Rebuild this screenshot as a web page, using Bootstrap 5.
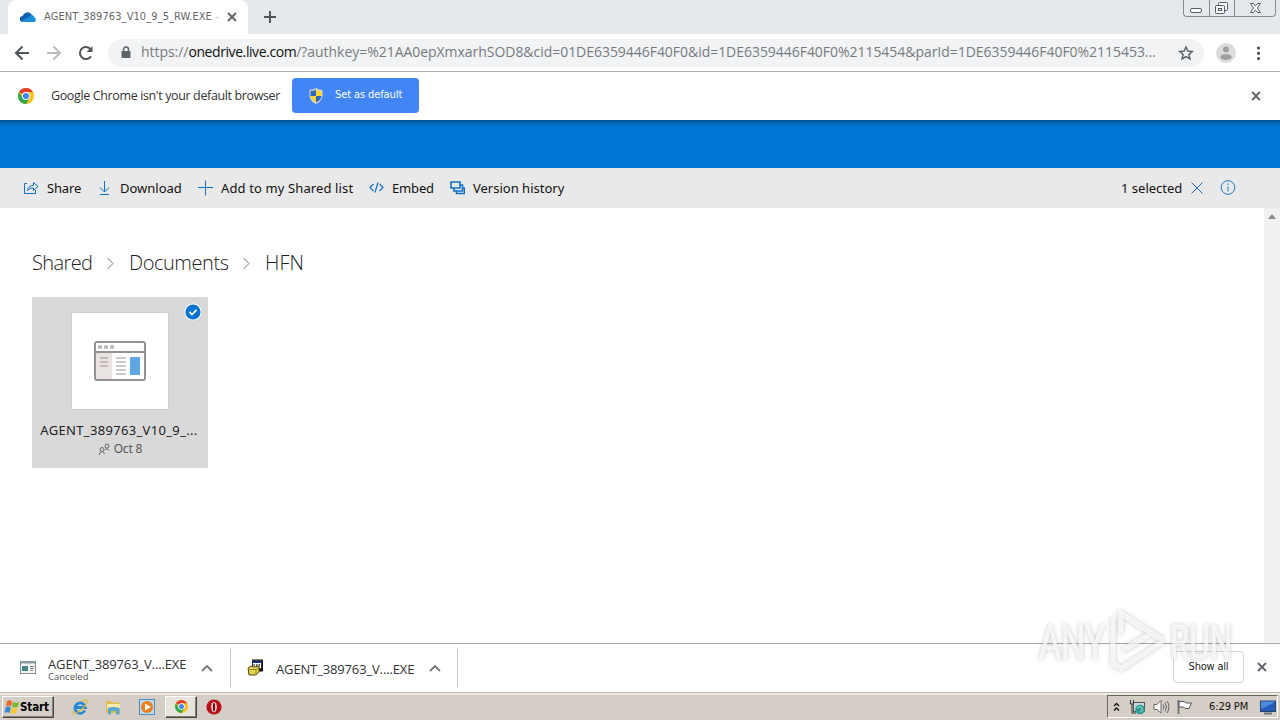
<!DOCTYPE html>
<html lang="en">
<head>
<meta charset="utf-8">
<meta name="viewport" content="width=device-width, initial-scale=1">
<title>OneDrive</title>
<link href="https://cdn.jsdelivr.net/npm/bootstrap@5.3.0/dist/css/bootstrap.min.css" rel="stylesheet">
<style>
body{width:1280px;height:720px;overflow:hidden;background:#fff;font-family:"DejaVu Sans Condensed","DejaVu Sans",sans-serif;font-size:12px;line-height:16px;color:#222;white-space:nowrap}
svg{display:block;flex:none}
.tabstrip{height:34px;background:#e4e9ed;padding-left:8px}
.tab-on{width:240px;background:#fff;border-radius:8px 8px 0 0;padding:0 11px 0 12px}
.tab-title{width:176px;margin-left:8px;font-family:"DejaVu Sans Condensed","DejaVu Sans",sans-serif;font-size:11px;color:#666;letter-spacing:.08px}
.win-ctl{width:93px;height:17px;border:1px solid #888c90;border-top:0;border-radius:0 0 4px 4px;margin-right:4px}
.win-ctl>span+span{border-left:1px solid #888c90}
.win-ctl>span{width:25px;height:16px}.win-ctl>span:last-child{width:42px}
.addr-row{height:38px;border-bottom:1px solid #adb0ae;padding-left:14px}
.omni{width:1096px;height:28px;background:#f1f3f4;border-radius:14px;margin-left:14px;padding:0 10px 0 9px}
.url{width:1034px;margin-left:10px;margin-top:-2px;font-family:"Open Sans",sans-serif;font-size:14px;color:#777b7f;letter-spacing:-.04px}
.url b{font-weight:400;color:#111;letter-spacing:-.42px}
.infobar{height:48px;padding-left:18px}
.info-text{width:241px;margin-left:17px;font-family:"Open Sans",sans-serif;font-size:12.5px;color:#333;letter-spacing:-.37px}
.btn-set{width:127px;height:35px;background:#4285f4;border-radius:4px;color:#fff;font-size:11px;padding:0 17px;border:0;margin-top:-1px}
.set-label{width:67px;margin-left:12px;text-align:left;letter-spacing:-.1px}
.suite{height:48px;background:linear-gradient(#04518c,#0068b8 3px,#0078d7 7px)}
.cmdbar{height:40px;background:#e9e9e9;padding-left:23px;font-family:"Noto Sans",sans-serif;font-size:13px;color:#111}
.cmd svg{margin-right:8px}
.c1{width:75px}.c2{width:100px}.c3{width:171px;letter-spacing:.12px}.c4{width:81px}
.c1,.c4{letter-spacing:-.15px}
.sel-text{width:69px}
.info-i{margin:0 44px 0 17px}
.page-body{height:435px}
.canvas{padding:43px 0 0 32px}
.crumbs{height:24px;font-family:"Open Sans",sans-serif;font-weight:300;font-size:20px;line-height:24px;color:#222}
.k1{width:97px;letter-spacing:-.6px}.k2{width:136px;letter-spacing:-.45px}
.crumbs svg{margin-right:11px}
.tile{width:176px;height:171px;background:#d9d9d9;margin-top:22px;padding-top:16px}
.thumb{width:96px;height:96px;background:#fff;box-shadow:0 0 2px #bbb}
.tick{right:6px;top:6px}
.tile-name{font-family:"Noto Sans",sans-serif;font-size:13px;margin:13px 2px 0 0;color:#222;letter-spacing:.33px}
.tile-date{font-family:"Noto Sans",sans-serif;font-size:12px;color:#555;margin-top:3px;letter-spacing:-.15px}
.scroller{width:16px;background:#f1f1f1;padding:6px 0 0 4px}
.shelf{height:49px;border-top:1px solid #a9a9a9;font-family:"Open Sans",sans-serif}
.dl{height:38px;border-right:1px solid #c9c9c9;margin-top:5px}
.d1{width:231px;padding-left:20px}.d2{width:227px;padding-left:16px}
.dl-name{font-size:13px;color:#333;line-height:14px;letter-spacing:-.14px}
.dl-sub{font-size:9.5px;color:#555;line-height:9px;margin-top:1px}
.dl-a{width:139px;margin:8px 14px 0 12px}
.dl-b{width:138px;margin:13px 15px 0 12px}
.up1,.up2{margin-top:15px}
.box-ic{margin-top:10px}
.btn-all{width:71px;height:32px;border:1px solid #d5d5d5;border-radius:4px;background:transparent;font-size:11px;color:#222;padding:0;margin:7px 13px 0 0;font-family:"DejaVu Sans Condensed","DejaVu Sans",sans-serif;letter-spacing:-.2px}
.shelf-x{margin:18px 13px 0 0}
.taskbar{height:28px;background:#d5cec6;border-top:1px solid #b9b6b1;box-shadow:inset 0 2px 0 #eeeae5;padding-left:2px}
.raised{height:22px;border:1px solid;border-color:#fff #494642 #494642 #fff;box-shadow:inset -1px -1px #858179;background:#d5cec6}
.start{width:52px;font-size:11.5px;color:#000;padding-left:1px;letter-spacing:-.1px}
.app-on{width:32px;background:#e7e3dd}
.ie{margin-left:17px}.fold{margin-left:16px}.wmp{margin:0 10px 0 18px}.opera{margin-left:9px}
.tray{width:171px;height:23px;border:1px solid;border-color:#6c6860 #fff #fff #6c6860;margin-right:2px;color:#111;font-size:11px}
.t1{margin-left:5px}.t2{margin-left:9px}.t3{margin-left:8px}.t4{margin-left:7px}.clock{width:44px;margin-left:15px;letter-spacing:-.1px}.t5{margin-left:7px}
.brandmark{left:1032px;top:602px;pointer-events:none;filter:drop-shadow(0 0 2px rgba(0,0,0,.3))}
</style>
</head>
<body class="d-flex flex-column position-relative">
<svg width="0" height="0" class="position-absolute"><defs>
<g id="chrome"><circle cx="8" cy="8" r="8" fill="#fbc116"/><path d="M8 8 1.100 4A8 8 0 0 1 14.900 4H8z" fill="#e33b2e"/><path d="M1.100 4 4.600 10 8 11.500 11.500 10 8 16A8 8 0 0 1 1.100 4z" fill="#2da94f"/><circle cx="8" cy="8" r="4" fill="#fff"/><circle cx="8" cy="8" r="3.100" fill="#4285f4"/></g>
<path id="cross" d="M1 1 9 9M9 1 1 9" fill="none" stroke="#5f6368" stroke-width="1.800"/>
</defs></svg>

<header class="tabstrip d-flex">
  <div class="tab-on d-flex align-items-center">
    <svg width="16" height="12" viewBox="0 0 16 12"><path d="M3 11A3 3 0 0 1 2.600 5 5 5 0 0 1 11.500 3.500L15 7 13 11z" fill="#0f5fae"/><path d="M8 6 11.500 4Q14 4 14.200 6.500 16 7 16 9 15.800 11 13.500 11z" fill="#1490df"/><path d="M1 10 8 6.500 15 10.400Q14.300 11 13 11H3Q1.600 11 1 10z" fill="#1b8fdb"/></svg>
    <span class="tab-title">AGENT_389763_V10_9_5_RW.EXE <span class="text-black-50 opacity-50">-</span></span>
    <svg class="ms-auto" width="10" height="10"><use href="#cross"/></svg>
  </div>
  <svg class="align-self-center ms-3" width="12" height="12"><path d="M6 0V12M0 6H12" stroke="#50555a" stroke-width="2"/></svg>
  <div class="win-ctl d-flex ms-auto">
    <span><svg width="25" height="16"><rect x="6.500" y="8.500" width="11" height="4" rx="1.500" fill="#fff" stroke="#555a66"/></svg></span>
    <span><svg width="25" height="16" fill="#f5f7f8" stroke="#555a66"><rect x="8.500" y="2.500" width="9" height="8" rx="1"/><rect x="5.500" y="5.500" width="9" height="8" rx="1"/><rect x="8.500" y="8.500" width="3" height="2"/></svg></span>
    <span><svg width="42" height="16"><path d="M15.500 3.500h3l2 2.500 2-2.500h3l-3 4.500 3 4.500h-3l-2-2.500-2 2.500h-3l3-4.500z" fill="#fff" stroke="#555a66"/></svg></span>
  </div>
</header>

<nav class="addr-row d-flex align-items-center">
  <svg width="16" height="16" fill="none" stroke="#50555a" stroke-width="2"><path d="M15 8H2M8.500 1.500 2 8l6.500 6.500"/></svg>
  <svg class="ms-3" width="16" height="16" fill="none" stroke="#babcbe" stroke-width="2"><path d="M1 8H14M7.500 1.500 14 8l-6.500 6.500"/></svg>
  <svg class="ms-3" width="16" height="16"><path d="M13 11.200A6 6 0 1 1 12.600 4.200" fill="none" stroke="#50555a" stroke-width="2"/><path d="M14.500 1V7H8.500z" fill="#50555a"/></svg>
  <div class="omni d-flex align-items-center">
    <svg class="ms-1" width="10" height="13"><rect x=".5" y="5" width="9" height="7" rx="1" fill="#5f6368"/><path d="M2.500 6V3.500a2.500 2.500 0 0 1 5 0V6" fill="none" stroke="#5f6368" stroke-width="1.500"/></svg>
    <div class="url">https://<b>onedrive.live.com</b>/?authkey=%21AA0epXmxarhSOD8&amp;cid=01DE6359446F40F0&amp;id=1DE6359446F40F0%2115454&amp;parId=1DE6359446F40F0%2115453...</div>
    <svg class="ms-1" width="16" height="16"><path d="M8 2 9.800 6.100 14.200 6.500 10.900 9.500 11.900 13.900 8 11.600 4.100 13.900 5.100 9.500 1.800 6.500 6.200 6.100z" fill="none" stroke="#5f6368" stroke-width="1.500"/></svg>
  </div>
  <svg class="ms-auto" width="20" height="20" viewBox="0 0 20 20"><circle cx="10" cy="10" r="10" fill="#dadcdd"/><circle cx="10" cy="6.500" r="3" fill="#9ea0a2"/><ellipse cx="10" cy="14" rx="5.700" ry="3" fill="#9ea0a2"/></svg>
  <svg class="ms-3 me-3 px-1" width="12" height="16" fill="#50555a"><circle cx="2.500" cy="3" r="1.600"/><circle cx="2.500" cy="8.300" r="1.600"/><circle cx="2.500" cy="13.600" r="1.600"/></svg>
</nav>

<section class="infobar d-flex align-items-center">
  <svg width="16" height="16"><use href="#chrome"/></svg>
  <span class="info-text">Google Chrome isn't your default browser</span>
  <button class="btn btn-set d-flex align-items-center">
    <svg width="14" height="16"><path d="M7 0Q10 2 13.500 2V8Q13 13 7 16 1 13 .5 8V2Q4 2 7 0z" fill="#d8d9d2"/><path d="M7 1.500V8H1.500V3Q5 3 7 1.500z" fill="#2c69b8"/><path d="M7 1.500Q9 3 12.500 3V8H7z" fill="#ffd431"/><path d="M1.500 8H7V14.500Q2 12 1.500 8z" fill="#ffd431"/><path d="M7 8h5.500Q12 12 7 14.500z" fill="#2c69b8"/></svg>
    <span class="set-label">Set as default</span>
  </button>
  <svg class="ms-auto me-3" width="13" height="10"><use href="#cross"/></svg>
</section>

<div class="suite"></div>

<div class="cmdbar d-flex align-items-center">
  <div class="cmd c1 d-flex align-items-center"><svg width="16" height="16" fill="none" stroke="#1071c4"><path d="M4 3.500H1.500v10h11V10M4.500 10.500Q5 5.500 10.500 5.500V2.500L15 6.500 10.500 10.500V8Q7 7.500 4.500 10.500z"/></svg>Share</div>
  <div class="cmd c2 d-flex align-items-center"><svg width="14" height="16" fill="none" stroke="#1071c4"><path d="M6.500 1V11.500M2 7.500l4.500 4.500L11 7.500M2 14.500h9"/></svg>Download</div>
  <div class="cmd c3 d-flex align-items-center"><svg width="15" height="16" stroke="#1071c4"><path d="M7.500 0.500v15M0 7.500h15"/></svg>Add to my Shared list</div>
  <div class="cmd c4 d-flex align-items-center"><svg width="15" height="16" fill="none" stroke="#1071c4" stroke-width="1.200"><path d="M4.500 4 1 7.500 4.500 11M10.500 4 14 7.500 10.500 11M9 2.500 6 12.500"/></svg>Embed</div>
  <div class="cmd d-flex align-items-center"><svg width="15" height="16" fill="none" stroke="#1071c4" stroke-width="1.600"><path d="M1 2H10V8H1zM10 5H12.500V11H4V8M12.500 8H14.500V13.500H6.500V11"/></svg>Version history</div>
  <div class="ms-auto d-flex align-items-center"><span class="sel-text">1 selected</span>
    <svg width="13" height="12" stroke="#1f67ad"><path d="M1.500.5 12.500 11.500M12.500.5 1.500 11.500"/></svg>
    <svg class="info-i" width="16" height="16"><circle cx="8" cy="7.500" r="6.800" fill="none" stroke="#1f75c4"/><path d="M8 6.500V11.500M8 3.500V5" stroke="#1f75c4"/></svg></div>
</div>

<main class="page-body d-flex">
  <div class="canvas flex-grow-1">
    <div class="crumbs d-flex">
      <div class="k1 d-flex align-items-center justify-content-between"><span>Shared</span><svg width="15" height="14" fill="none" stroke="#777"><path d="M4.500 2 10 7.500 4.500 13"/></svg></div>
      <div class="k2 d-flex align-items-center justify-content-between"><span>Documents</span><svg width="15" height="14" fill="none" stroke="#777"><path d="M4.500 2 10 7.500 4.500 13"/></svg></div>
      <span>HFN</span>
    </div>
    <article class="tile position-relative text-center">
      <svg class="tick position-absolute" width="18" height="18"><circle cx="9" cy="9" r="8.500" fill="#fff"/><circle cx="9" cy="9" r="7.600" fill="#0874cf"/><path d="M5.500 9 8 11.500 12.500 6.800" fill="none" stroke="#fff" stroke-width="1.800"/></svg>
      <div class="thumb mx-auto d-flex align-items-center justify-content-center">
        <svg width="52" height="40"><rect x="1" y="1" width="50" height="38" rx="2" fill="#fff"/><path d="M2 12H18V38H2z" fill="#e9e4e2"/><rect x="1" y="1" width="50" height="38" rx="2" fill="none" stroke="#929292" stroke-width="2"/><path d="M1 11H51" stroke="#929292" stroke-width="2"/><path d="M4 6h4M10 6h4M16 6h4" stroke="#b9b9b9" stroke-width="3.500"/><path d="M6 17h8M6 21h8M6 25h8" stroke="#bcaeab" stroke-width="1.600"/><path d="M22 17h10M22 21h10M22 25h10M22 29h10M22 33h10" stroke="#b9b9b9" stroke-width="1.600"/><rect x="36" y="16" width="10" height="18" rx="1" fill="#5ea7e4"/></svg>
      </div>
      <div class="tile-name">AGENT_389763_V10_9_...</div>
      <div class="tile-date d-flex justify-content-center align-items-center"><svg class="me-1" width="12" height="12" fill="none" stroke="#666"><circle cx="4" cy="6.500" r="2"/><path d="M1 12Q1.500 9 4 8.500 6 9 6.500 11"/><circle cx="9" cy="3" r="2"/><path d="M7 7Q9 4 11 7.500"/></svg>Oct 8</div>
    </article>
  </div>
  <div class="scroller"><svg width="8" height="5"><path d="M0 5 4 0 8 5z" fill="#8d8d8d"/></svg></div>
</main>

<footer class="shelf d-flex">
  <div class="dl d1 d-flex">
    <svg class="mt-2 pt-1" width="16" height="18"><rect x=".5" y=".5" width="15" height="12" fill="#f4f4f4" stroke="#8c8f93"/><path d="M0 1.500H16" stroke="#8b9da3" stroke-width="2"/><path d="M2 5H8V10H2z" fill="#3f8a83"/><path d="M10 5.500h4M10 7.500h4M10 9.500h3" stroke="#8b8f93"/></svg>
    <div class="dl-a"><div class="dl-name">AGENT_389763_V....EXE</div><div class="dl-sub">Canceled</div></div>
    <svg class="up1" width="12" height="8"><path d="M1 7 6 2 11 7" fill="none" stroke="#777" stroke-width="1.800"/></svg>
  </div>
  <div class="dl d2 d-flex">
    <svg class="box-ic" width="17" height="17"><rect x="5" y=".5" width="11" height="12" fill="#111"/><path d="M5.500 1.500h9v8h-9z" fill="#fff" stroke="#333"/><path d="M6 2h8v2H6z" fill="#1c2b7c"/><path d="M6.500 6h1.500M9 6h1.500M11.500 6H13" stroke="#333" stroke-width="1.500"/><path d="M1 9 4 7 7 8 12 7V13L9 16H2z" fill="#e2d54a" stroke="#4d4813"/><path d="M1 10.500H9V16M9 10.500 12 8" fill="none" stroke="#8e8526"/></svg>
    <div class="dl-b"><div class="dl-name">AGENT_389763_V....EXE</div></div>
    <svg class="up2" width="12" height="8"><path d="M1 7 6 2 11 7" fill="none" stroke="#777" stroke-width="1.800"/></svg>
  </div>
  <button class="btn btn-all ms-auto">Show all</button>
  <svg class="shelf-x" width="10" height="10"><use href="#cross"/></svg>
</footer>

<div class="taskbar d-flex align-items-center">
  <div class="raised start d-flex align-items-center fw-bold"><svg width="16" height="16"><path d="M3 2Q6 .5 8 2.500L7 7.500Q5 6 2 7z" fill="#ec672c"/><path d="M9 3Q12 4.500 15 3L13.700 8Q11 9 8 7.800z" fill="#7ab72f"/><path d="M1.800 8Q4.500 7 6.800 8.500L5.500 14Q3 12.500.5 13.700z" fill="#3586d4"/><path d="M7.800 8.800Q10.500 10 13.500 9L12.200 14Q9 15 6.500 14z" fill="#f7ca31"/></svg><span>Start</span></div>
  <svg class="ie" width="18" height="18"><path d="M13.800 12.500A5.200 5.200 0 1 1 14.300 9.500H5" fill="none" stroke="#238ad8" stroke-width="2.800"/><path d="M3 12.500Q0 17 4.500 15.500 13 11 16 4.500 17 0 10 3.500" fill="none" stroke="#dfb73a" stroke-width="1.300"/></svg>
  <svg class="fold" width="16" height="16"><path d="M1 2h5l1 1.500h8V14H1z" fill="#e0bc4c"/><path d="M2 5H15V10H2z" fill="#f9eba7"/><path d="M3 9Q8 7 14.500 9V15.500H11V12H6V15.500H3z" fill="#58a9d6"/></svg>
  <svg class="wmp" width="16" height="16"><rect x=".5" y=".5" width="15" height="15" fill="#bedaf1" stroke="#4b8ec8"/><circle cx="8" cy="8" r="6" fill="#ef7e16"/><path d="M6 4.500 12 8 6 11.500z" fill="#fff"/></svg>
  <div class="raised app-on d-flex align-items-center justify-content-center"><svg width="13" height="13" viewBox="0 0 16 16"><use href="#chrome"/></svg></div>
  <svg class="opera" width="16" height="16"><circle cx="8" cy="8" r="7.600" fill="#b80f18"/><ellipse cx="8" cy="8" rx="2.800" ry="5.300" fill="#f3e6e6"/><ellipse cx="8" cy="8" rx="1.200" ry="4.600" fill="#7c0c12"/></svg>
  <div class="tray d-flex align-items-center ms-auto">
    <svg class="t1" width="7" height="10" fill="none" stroke="#111" stroke-width="1.300"><path d="M1 4 3.500 1.500 6 4M1 8.500 3.500 6 6 8.500"/></svg>
    <svg class="t2" width="16" height="16"><rect x="4.500" y="3.500" width="11" height="9" fill="#cbd8da" stroke="#555"/><path d="M1.500 1v4h3V1M3 5v9h4" fill="none" stroke="#333"/><circle cx="11" cy="10.500" r="4.800" fill="#2b9c93"/><path d="M8 9q3-3 5 0t-2 4" fill="none" stroke="#a6e1cd"/></svg>
    <svg class="t3" width="17" height="16" fill="none" stroke="#666"><path d="M1 5.500H4L8 1.500V14L4 10.500H1z" fill="#fff"/><path d="M10 5.500Q12 8 10 10.500M12 3.500Q15 8 12 12.500M14 2Q18 8 14 14"/></svg>
    <svg class="t4" width="17" height="16"><path d="M1.500 1V15" stroke="#777" stroke-width="2"/><path d="M2 2.500H7L9 4H14.500L12 9.500H8L6.500 8H2z" fill="#fff" stroke="#555"/></svg>
    <span class="clock">6:29 PM</span>
    <svg class="t5" width="16" height="16"><rect x=".5" y="2" width="15" height="10.500" fill="#255cba" stroke="#23406e"/><path d="M1 10 15 3V2.500H1z" fill="#4f8bdd"/><path d="M4 14.500H12" stroke="#66727e" stroke-width="2"/></svg>
  </div>
</div>

<svg class="brandmark position-absolute" width="205" height="76">
  <g stroke="#fff" stroke-width="1" fill="#fff" opacity=".72">
    <text x="7" y="57" font-family="Roboto,sans-serif" font-size="48" textLength="66" lengthAdjust="spacingAndGlyphs">ANY</text>
    <text x="138" y="57" font-family="Roboto,sans-serif" font-size="48" textLength="62" lengthAdjust="spacingAndGlyphs">RUN</text>
    <path d="M79 17 83 14V60L89 64 131 37V42L90 69 79 64zM87 8 91 10 132 36 128 39 91 16V30L87 33zM91 45 116 31 119 34 91 51z"/>
  </g>
</svg>
<script src="https://cdn.jsdelivr.net/npm/bootstrap@5.3.0/dist/js/bootstrap.bundle.min.js"></script>
</body>
</html>
